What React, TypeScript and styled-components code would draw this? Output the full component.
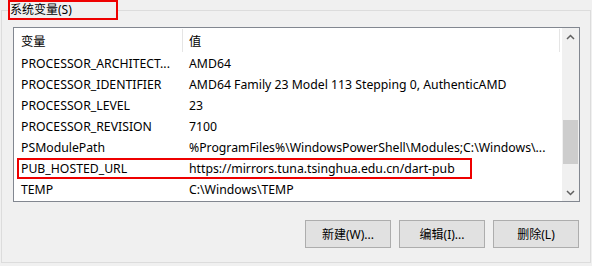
import styled, { createGlobalStyle } from 'styled-components';

const GlobalStyle = createGlobalStyle`
  html, body {
    margin: 0;
    background: #f0f0f0;
  }
  body {
    font-family: "Noto Sans", "Noto Sans CJK SC", sans-serif;
    font-size: 12px;
    color: #000;
  }
`;

const Group = styled.fieldset`
  box-sizing: border-box;
  width: 590px;
  height: 263px;
  margin: 0 0 0 1px;
  padding: 0;
  border: 1px solid #dcdcdc;
  min-inline-size: 0;
`;

const Legend = styled.legend`
  box-sizing: border-box;
  width: 110px;
  height: 20px;
  margin-left: 6px;
  padding: 0;
  border: 2px solid #ee0000;
  line-height: 15px;
  white-space: nowrap;
`;

const Body = styled.div`
  padding: 7px 10px 0 11px;
`;

const ListBox = styled.div`
  box-sizing: border-box;
  height: 175px;
  border: 1px solid #828790;
  background: #fff;
  display: grid;
  grid-template-columns: 1fr 17px;
  overflow: hidden;
  font-size: 12.25px;
`;

const Content = styled.div`
  display: flex;
  flex-direction: column;
  overflow: hidden;
`;

const HeaderRow = styled.div`
  display: grid;
  grid-template-columns: 169px 377px 1fr;
  height: 25px;
  align-items: stretch;
`;

const HeaderCell = styled.div`
  display: flex;
  align-items: center;
  padding-left: ${(p: { $pad: number }) => p.$pad}px;
  border-right: 1px solid #e5e5e5;
  margin: 1px 0 1px;
`;

const Row = styled.div`
  position: relative;
  display: grid;
  grid-template-columns: 169px 1fr;
  height: 21px;
  flex-shrink: 0;
  align-items: center;
  white-space: nowrap;
`;

const Cell = styled.div`
  padding-left: ${(p: { $pad: number }) => p.$pad}px;
  overflow: hidden;
`;

const Marker = styled.span`
  position: absolute;
  left: 3px;
  top: 0;
  width: 455px;
  height: 21px;
  box-sizing: border-box;
  border: 2px solid #ee0000;
  pointer-events: none;
`;

const ScrollBar = styled.div`
  background: #f0f0f0;
  display: flex;
  flex-direction: column;
`;

const ArrowButton = styled.div`
  height: 17px;
  display: flex;
  align-items: center;
  justify-content: center;
  flex-shrink: 0;
`;

const Track = styled.div`
  flex: 1;
  padding-top: 75px;
`;

const Thumb = styled.div`
  margin: 0 1px;
  height: 44px;
  background: #cdcdcd;
`;

const Buttons = styled.div`
  display: flex;
  justify-content: flex-end;
  gap: 8px;
  margin: 18px 1px 0 0;
`;

const Button = styled.button`
  box-sizing: border-box;
  width: 86px;
  height: 28px;
  padding: 0;
  border: 1px solid #adadad;
  background: #e1e1e1;
  font: inherit;
  color: #000;
`;

const Chevron = ({ up }: { up?: boolean }) => (
  <svg width="9" height="6" viewBox="0 0 9 6">
    <path
      d={up ? 'M1 5 L4.5 1.5 L8 5' : 'M1 1 L4.5 4.5 L8 1'}
      fill="none"
      stroke="#606060"
      strokeWidth="1.5"
    />
  </svg>
);

const rows = [
  ['PROCESSOR_ARCHITECT...', 'AMD64'],
  ['PROCESSOR_IDENTIFIER', 'AMD64 Family 23 Model 113 Stepping 0, AuthenticAMD'],
  ['PROCESSOR_LEVEL', '23'],
  ['PROCESSOR_REVISION', '7100'],
  ['PSModulePath', '%ProgramFiles%\\WindowsPowerShell\\Modules;C:\\Windows\\...'],
  ['PUB_HOSTED_URL', 'https://mirrors.tuna.tsinghua.edu.cn/dart-pub'],
  ['TEMP', 'C:\\Windows\\TEMP'],
];

export default function App() {
  return (
    <>
      <GlobalStyle />
      <Group>
        <Legend>系统变量(S)</Legend>
        <Body>
          <ListBox>
            <Content>
              <HeaderRow>
                <HeaderCell $pad={7}>变量</HeaderCell>
                <HeaderCell $pad={6}>值</HeaderCell>
              </HeaderRow>
              {rows.map(([name, value]) => (
                <Row key={name}>
                  <Cell $pad={7}>{name}</Cell>
                  <Cell $pad={6}>{value}</Cell>
                  {name === 'PUB_HOSTED_URL' && <Marker />}
                </Row>
              ))}
            </Content>
            <ScrollBar>
              <ArrowButton>
                <Chevron up />
              </ArrowButton>
              <Track>
                <Thumb />
              </Track>
              <ArrowButton>
                <Chevron />
              </ArrowButton>
            </ScrollBar>
          </ListBox>
          <Buttons>
            <Button>新建(W)...</Button>
            <Button>编辑(I)...</Button>
            <Button>删除(L)</Button>
          </Buttons>
        </Body>
      </Group>
    </>
  );
}
